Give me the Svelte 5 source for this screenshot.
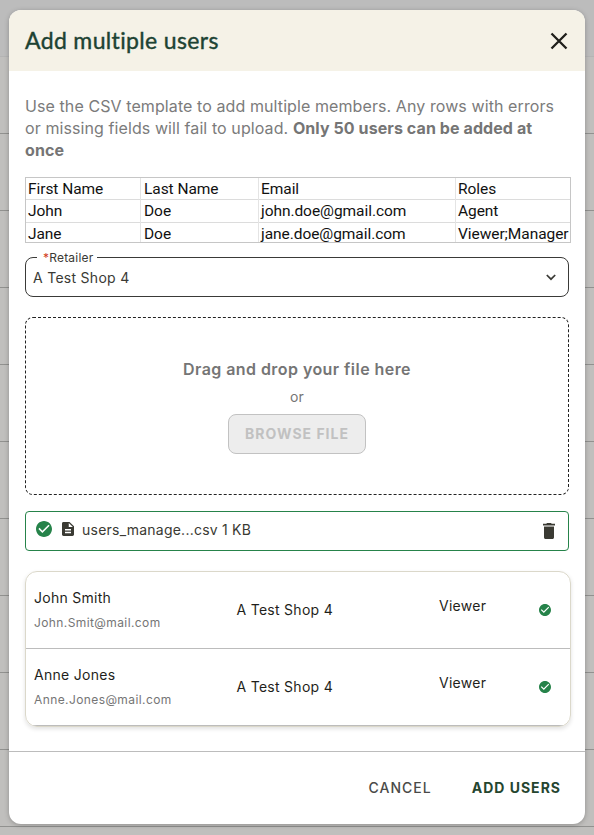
<script lang="ts">
  const template = [
    ['First Name', 'Last Name', 'Email', 'Roles'],
    ['John', 'Doe', 'john.doe@gmail.com', 'Agent'],
    ['Jane', 'Doe', 'jane.doe@gmail.com', 'Viewer;Manager'],
  ];

  const users = [
    { name: 'John Smith', email: 'John.Smit@mail.com', retailer: 'A Test Shop 4', role: 'Viewer' },
    { name: 'Anne Jones', email: 'Anne.Jones@mail.com', retailer: 'A Test Shop 4', role: 'Viewer' },
  ];

  const backdropRows = Array.from({ length: 11 });
</script>

{#snippet check()}
  <svg class="check" viewBox="2 2 20 20" aria-hidden="true">
    <path d="M12 2C6.48 2 2 6.48 2 12s4.48 10 10 10 10-4.48 10-10S17.52 2 12 2zm-2 15-5-5 1.41-1.41L10 14.17l7.59-7.59L19 8l-9 9z" />
  </svg>
{/snippet}

<div class="page">
  <div class="backdrop">
    <div class="backdrop-head"></div>
    {#each backdropRows as _}
      <div class="backdrop-row"></div>
    {/each}
  </div>

  <div class="dialog" role="dialog" aria-labelledby="dialog-title">
    <header class="header">
      <h2 id="dialog-title">Add multiple users</h2>
      <button type="button" class="close" aria-label="Close">
        <svg width="18" height="18" viewBox="0 0 18 18"><path d="M1.5 1.5l15 15M16.5 1.5l-15 15" fill="none" stroke="currentColor" stroke-width="2.3" /></svg>
      </button>
    </header>

    <div class="body">
      <p class="intro">
        Use the CSV template to add multiple members. Any rows with errors or missing fields will fail to upload. <strong>Only 50 users can be added at once</strong>
      </p>

      <div class="template">
        {#each template as row}
          <div class="template-row">
            {#each row as cell}
              <span>{cell}</span>
            {/each}
          </div>
        {/each}
      </div>

      <fieldset class="select">
        <legend><span class="required">*</span>Retailer</legend>
        <div class="select-box">
          <span>A Test Shop 4</span>
          <svg width="10" height="7" viewBox="0 0 10 7" aria-hidden="true"><path d="M.8 1l4.2 4.2L9.200 1" fill="none" stroke="currentColor" stroke-width="1.7" /></svg>
        </div>
      </fieldset>

      <div class="dropzone">
        <strong>Drag and drop your file here</strong>
        <span>or</span>
        <button type="button" disabled>BROWSE FILE</button>
      </div>

      <div class="file">
        {@render check()}
        <svg class="doc" width="12" height="14" viewBox="4 2 16 20" preserveAspectRatio="none" aria-hidden="true"><path d="M14 2H6c-1.100 0-2 .9-2 2v16c0 1.100.9 2 2 2h12c1.100 0 2-.9 2-2V8l-6-6zm2 16H8v-2h8v2zm0-4H8v-2h8v2zm-3-5V3.500L18.500 9H13z" /></svg>
        <span class="file-name">users_manage...csv 1 KB</span>
        <button type="button" class="remove" aria-label="Remove file">
          <svg width="12" height="16" viewBox="0 0 12 16"><path d="M1 4h10v10.200c0 1-.7 1.800-1.600 1.800H2.600C1.700 16 1 15.200 1 14.200zM0 .8h3.300L4 0h4l.7.8H12v1.700H0z" fill="currentColor" /><path d="M1 2.500h10V4H1z" fill="#a3a29e" /></svg>
        </button>
      </div>

      <ul class="users">
        {#each users as user}
          <li>
            <div class="identity">
              <span>{user.name}</span>
              <small>{user.email}</small>
            </div>
            <span class="retailer">{user.retailer}</span>
            <span class="role">{user.role}</span>
            {@render check()}
          </li>
        {/each}
      </ul>
    </div>

    <footer class="footer">
      <button type="button">CANCEL</button>
      <button type="button" class="primary">ADD USERS</button>
    </footer>
  </div>
</div>

<style>
  :global(body) {
    margin: 0;
    overflow: hidden;
  }

  .page {
    display: grid;
    width: 594px;
    height: 835px;
    overflow: hidden;
    font-family: Inter, sans-serif;
    font-size: 14px;
    letter-spacing: 0.28px;
    color: #1f1f1b;
  }

  .page * {
    box-sizing: border-box;
  }

  .backdrop,
  .dialog {
    grid-area: 1 / 1;
  }

  .backdrop {
    height: 835px;
    overflow: hidden;
    background: #c0bfbd;
  }

  .backdrop-head {
    height: 57px;
    background: #bcbcbc;
    border-bottom: 1px solid #b4b4b4;
  }

  .backdrop-row {
    height: 77px;
    border-bottom: 1px solid #91918f;
  }

  /* --- Dialog --- */
  .dialog {
    z-index: 1;
    display: flex;
    flex-direction: column;
    width: 576px;
    height: 814px;
    margin: 10px 9px 0;
    background: #fff;
    border-radius: 12px;
    overflow: hidden;
    box-shadow: 0 1px 5px rgba(0, 0, 0, 0.25);
  }

  button {
    padding: 0;
    border: 0;
    background: transparent;
    font: inherit;
    letter-spacing: inherit;
    color: inherit;
  }

  .header {
    display: flex;
    align-items: center;
    justify-content: space-between;
    height: 61px;
    padding: 0 17px 0 16px;
    background: #f5f2e7;
  }

  h2 {
    margin: -2px 0 0;
    font-family: Lato, sans-serif;
    font-size: 23px;
    font-weight: 400;
    letter-spacing: 0.35px;
    color: #1d4333;
    -webkit-text-stroke: 0.4px #1d4333;
  }

  .close {
    display: flex;
  }

  .body {
    display: flex;
    flex-direction: column;
    padding: 24px 16px 0;
    height: 680px;
  }

  .intro {
    margin: 0 0 16px;
    font-size: 16px;
    line-height: 22px;
    letter-spacing: 0.09px;
    color: #7b7b7b;
  }

  .intro strong {
    font-weight: 700;
    color: #757575;
  }

  /* --- CSV template --- */
  .template {
    width: 546px;
    height: 66px;
    flex: none;
    border: 1px solid #c6c6c6;
    overflow: hidden;
    font-family: Roboto, sans-serif;
    font-size: 15.5px;
    letter-spacing: -0.06px;
    color: #111;
  }

  .template-row {
    display: grid;
    grid-template-columns: 115px 118px 197px 1fr;
    height: 22px;
    border-bottom: 1px solid #dcdcdc;
    line-height: 22px;
  }

  .template-row + .template-row {
    height: 23px;
    line-height: 23px;
  }

  .template-row:last-child {
    border-bottom: 0;
    line-height: 22px;
  }

  .template-row span {
    padding-left: 2px;
    border-right: 1px solid #e4e4e4;
    white-space: nowrap;
  }

  .template-row span:nth-child(2) {
    padding-left: 3px;
  }

  .template-row span:last-child {
    border-right: 0;
  }

  /* --- Retailer select --- */
  .select {
    height: 46px;
    flex: none;
    margin: 8px 0 20px;
    padding: 0 12px 0 7px;
    border: 1px solid #3a3a38;
    border-radius: 8px;
    color: #3a3a35;
  }

  .select legend {
    height: 13px;
    margin-left: 4px;
    padding: 0 4px 0 6px;
    font-size: 12px;
    line-height: 13px;
    letter-spacing: 0.2px;
  }

  .select-box {
    display: flex;
    align-items: center;
    justify-content: space-between;
    height: 26px;
  }

  .required {
    color: #d13b20;
  }

  /* --- Dropzone --- */
  .dropzone {
    display: flex;
    flex-direction: column;
    align-items: center;
    height: 178px;
    flex: none;
    padding-top: 41px;
    border: 1px dashed #222;
    border-radius: 8px;
    color: #757575;
  }

  .dropzone strong {
    font-size: 16px;
    font-weight: 600;
    line-height: 20px;
    letter-spacing: 0.44px;
  }

  .dropzone span {
    margin: 8px 0;
    line-height: 19px;
  }

  .dropzone button {
    width: 138px;
    height: 40px;
    padding-bottom: 1px;
    border: 1px solid #c2c2c2;
    border-radius: 8px;
    background: #ededed;
    font-weight: 700;
    letter-spacing: 1px;
    color: #c1c1c1;
  }

  /* --- Uploaded file --- */
  .file {
    display: flex;
    align-items: center;
    height: 40px;
    flex: none;
    margin: 16px 0 20px;
    padding: 0 13px 2px 10px;
    border: 1px solid #26834a;
    border-radius: 4px;
    color: #3a3a33;
  }

  .check {
    flex: none;
    width: 12px;
    height: 12px;
    fill: #26834a;
  }

  .file .check {
    width: 16px;
    height: 16px;
    margin-top: -3px;
  }

  .doc {
    margin: -2px 8px 0 10px;
    fill: #3a3a33;
  }

  .file-name {
    margin-top: -2px;
    letter-spacing: 0.23px;
  }

  .remove {
    display: flex;
    margin: 1px 0 0 auto;
  }

  /* --- Parsed users --- */
  .users {
    width: 546px;
    flex: none;
    margin: 0;
    padding: 0;
    list-style: none;
    border: 1px solid #dbd8ca;
    border-radius: 12px;
    overflow: hidden;
    box-shadow: 0 2px 4px rgba(0, 0, 0, 0.12);
  }

  .users li {
    display: grid;
    grid-template-columns: 202.500px 202.500px 100px 12px;
    align-items: center;
    height: 77px;
    padding-left: 8px;
    border-bottom: 1px solid #bcbcbc;
  }

  .identity {
    display: flex;
    flex-direction: column;
    gap: 8px;
    margin-top: -1px;
  }

  .identity span {
    line-height: 18px;
  }

  .identity small {
    font-size: 12px;
    line-height: 16px;
    letter-spacing: 0.4px;
    color: #757575;
  }

  .retailer {
    padding-bottom: 2px;
  }

  .role {
    padding-bottom: 10px;
  }

  /* --- Footer --- */
  .footer {
    display: flex;
    flex: 1;
    align-items: center;
    justify-content: flex-end;
    gap: 40px;
    padding: 0 24px 1px 0;
    border-top: 1px solid #bcbcbc;
    letter-spacing: 1px;
    color: #4a4a48;
  }

  .footer button {
    font-weight: 500;
  }

  .footer .primary {
    font-weight: 700;
    color: #25452f;
  }
</style>
